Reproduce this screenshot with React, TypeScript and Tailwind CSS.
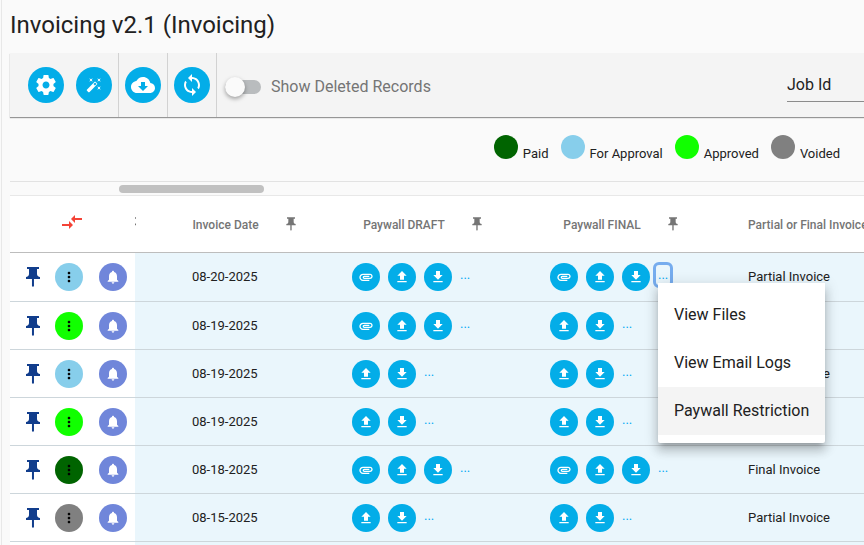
import React from "react";

type Status = "paid" | "forApproval" | "approved" | "voided";

interface Invoice {
  id: number;
  status: Status;
  date: string;
  draftFiles: boolean;
  finalFiles: boolean;
  kind: string;
  menuOpen?: boolean;
}

const statusColor: Record<Status, string> = {
  paid: "bg-[#006400]",
  forApproval: "bg-[#87ceeb]",
  approved: "bg-[#11ff00]",
  voided: "bg-[#808080]",
};

const legend: { status: Status; label: string }[] = [
  { status: "paid", label: "Paid" },
  { status: "forApproval", label: "For Approval" },
  { status: "approved", label: "Approved" },
  { status: "voided", label: "Voided" },
];

const invoices: Invoice[] = [
  { id: 1, status: "forApproval", date: "08-20-2025", draftFiles: true, finalFiles: true, kind: "Partial Invoice", menuOpen: true },
  { id: 2, status: "approved", date: "08-19-2025", draftFiles: true, finalFiles: false, kind: "" },
  { id: 3, status: "forApproval", date: "08-19-2025", draftFiles: false, finalFiles: false, kind: "Partial Invoice" },
  { id: 4, status: "approved", date: "08-19-2025", draftFiles: false, finalFiles: false, kind: "" },
  { id: 5, status: "paid", date: "08-18-2025", draftFiles: true, finalFiles: true, kind: "Final Invoice" },
  { id: 6, status: "voided", date: "08-15-2025", draftFiles: false, finalFiles: false, kind: "Partial Invoice" },
];

const paths = {
  settings:
    "M19.43 12.98c.04-.32.07-.64.07-.98s-.03-.66-.07-.98l2.11-1.65c.19-.15.24-.42.12-.64l-2-3.46c-.12-.22-.39-.3-.61-.22l-2.49 1c-.52-.4-1.08-.73-1.69-.98l-.38-2.65C14.46 2.18 14.25 2 14 2h-4c-.25 0-.46.18-.49.42l-.38 2.65c-.61.25-1.17.59-1.69.98l-2.49-1c-.23-.09-.49 0-.61.22l-2 3.46c-.13.22-.07.49.12.64l2.11 1.65c-.04.32-.07.65-.07.98s.03.66.07.98l-2.11 1.65c-.19.15-.24.42-.12.64l2 3.46c.12.22.39.3.61.22l2.49-1c.52.4 1.08.73 1.69.98l.38 2.65c.03.24.24.42.49.42h4c.25 0 .46-.18.49-.42l.38-2.65c.61-.25 1.17-.59 1.69-.98l2.49 1c.23.09.49 0 .61-.22l2-3.46c.12-.22.07-.49-.12-.64l-2.11-1.65zM12 15.5c-1.93 0-3.5-1.57-3.5-3.5s1.57-3.5 3.5-3.5 3.5 1.57 3.5 3.5-1.57 3.5-3.5 3.5z",
  wand: "M7.5 5.6L5 7l1.4-2.5L5 2l2.5 1.4L10 2 8.6 4.5 10 7 7.5 5.6zm12 9.8L22 14l-1.4 2.5L22 19l-2.5-1.4L17 19l1.4-2.5L17 14l2.5 1.4zM22 2l-1.4 2.5L22 7l-2.5-1.4L17 7l1.4-2.5L17 2l2.5 1.4L22 2zm-8.66 10.78l2.44-2.44-2.12-2.12-2.44 2.44 2.12 2.12zm1.03-5.49l2.34 2.34c.39.37.39 1.02 0 1.41L5.04 22.71c-.39.39-1.04.39-1.41 0l-2.34-2.34c-.39-.37-.39-1.02 0-1.41L12.96 7.29c.39-.39 1.04-.39 1.41 0z",
  cloud:
    "M19.35 10.04C18.67 6.59 15.64 4 12 4 9.11 4 6.6 5.64 5.35 8.04 2.34 8.36 0 10.91 0 14c0 3.31 2.69 6 6 6h13c2.76 0 5-2.24 5-5 0-2.64-2.05-4.78-4.65-4.96zM17 13l-5 5-5-5h3V9h4v4h3z",
  sync: "M12 4V1L8 5l4 4V6c3.31 0 6 2.69 6 6 0 1.01-.25 1.97-.7 2.8l1.46 1.46C19.54 15.03 20 13.57 20 12c0-4.42-3.58-8-8-8zm0 14c-3.31 0-6-2.69-6-6 0-1.01.25-1.97.7-2.8L5.24 7.74C4.46 8.97 4 10.43 4 12c0 4.42 3.58 8 8 8v3l4-4-4-4v3z",
  compare: "M9.01 14H2v2h7.01v3L13 15l-3.99-4v3zm5.98-1v-3H22V8h-7.01V5L11 9l3.99 4z",
  pin: "M16 9V4h2V2H6v2h2v5c0 1.66-1.34 3-3 3v2h5.97v7l1 1 1-1v-7H19v-2c-1.66 0-3-1.34-3-3z",
  more: "M12 8c1.1 0 2-.9 2-2s-.9-2-2-2-2 .9-2 2 .9 2 2 2zm0 2c-1.1 0-2 .9-2 2s.9 2 2 2 2-.9 2-2-.9-2-2-2zm0 6c-1.1 0-2 .9-2 2s.9 2 2 2 2-.9 2-2-.9-2-2-2z",
  bell: "M12 22c1.1 0 2-.9 2-2h-4c0 1.1.89 2 2 2zm6-6v-5c0-3.07-1.64-5.64-4.5-6.32V4c0-.83-.67-1.5-1.5-1.5s-1.5.67-1.5 1.5v.68C7.63 5.36 6 7.92 6 11v5l-2 2v1h16v-1l-2-2z",
  attachment:
    "M2 12.5C2 9.46 4.46 7 7.5 7H18c2.21 0 4 1.79 4 4s-1.79 4-4 4H9.5C8.12 15 7 13.88 7 12.5S8.12 10 9.5 10H17v2H9.41c-.55 0-.55 1 0 1H18c1.1 0 2-.9 2-2s-.9-2-2-2H7.5C5.57 9 4 10.57 4 12.5S5.57 16 7.5 16H17v2H7.5C4.46 18 2 15.54 2 12.5z",
  upload: "M9 16h6v-6h4l-7-7-7 7h4zm-4 2h14v2H5z",
  download: "M19 9h-4V3H9v6H5l7 7 7-7zM5 18v2h14v-2H5z",
};

function Icon({ name, className }: { name: keyof typeof paths; className: string }) {
  return (
    <svg viewBox="0 0 24 24" fill="currentColor" aria-hidden="true" className={`block shrink-0 ${className}`}>
      <path d={paths[name]} />
    </svg>
  );
}

function ToolButton({ icon, label, size = "size-6" }: { icon: keyof typeof paths; label: string; size?: string }) {
  return (
    <button type="button" aria-label={label} className="flex size-9 items-center justify-center rounded-full bg-[#03ade8] text-white">
      <Icon name={icon} className={size} />
    </button>
  );
}

function RoundButton({ icon, label, className, size }: { icon: keyof typeof paths; label: string; className: string; size: string }) {
  return (
    <button type="button" aria-label={label} className={`flex size-7 shrink-0 items-center justify-center rounded-full ${className}`}>
      <Icon name={icon} className={size} />
    </button>
  );
}

function FileActions({ attachment, menuOpen = false }: { attachment: boolean; menuOpen?: boolean }) {
  const blue = "bg-[#03ade8] text-white";
  return (
    <div className="flex items-center gap-2 pl-3">
      {attachment && <RoundButton icon="attachment" label="Attachment" className={blue} size="size-4" />}
      <RoundButton icon="upload" label="Upload" className={blue} size="size-4" />
      <RoundButton icon="download" label="Download" className={blue} size="size-4" />
      <div className="relative mb-1">
        <button
          type="button"
          aria-label="More options"
          aria-expanded={menuOpen}
          className={`block text-[13px] leading-4 text-[#03a9f4] ${menuOpen ? "rounded-[1px] outline-3 outline-offset-2 outline-[#76acee]" : ""}`}
        >
          ...
        </button>
        {menuOpen && <OptionsMenu />}
      </div>
    </div>
  );
}

function OptionsMenu() {
  const item = "block h-12 w-full px-4 text-left text-base whitespace-nowrap text-[#212121]";
  return (
    <div
      role="menu"
      className="absolute top-full left-0 z-10 rounded-b-xs bg-white py-2 shadow-[0_5px_5px_-3px_rgba(0,0,0,0.2),0_8px_10px_1px_rgba(0,0,0,0.14),0_3px_14px_2px_rgba(0,0,0,0.12)]"
    >
      <button type="button" role="menuitem" className={item}>View Files</button>
      <button type="button" role="menuitem" className={item}>View Email Logs</button>
      <button type="button" role="menuitem" className={`${item} bg-[#f4f4f4]`}>Paywall Restriction</button>
    </div>
  );
}

function HeaderLabel({ text, className }: { text: string; className: string }) {
  return (
    <div className={`flex items-center justify-center gap-6 ${className}`}>
      <span className="pt-0.5">{text}</span>
      <button type="button" aria-label={`Pin ${text}`}>
        <Icon name="pin" className="size-4" />
      </button>
    </div>
  );
}

export default function App() {
  return (
    <div className="h-screen overflow-hidden bg-[#fafafa] pl-px font-['Roboto',sans-serif] text-[#212121]">
      <main className="h-full border-l border-[#e8e8e8] pl-2">
        <h1 className="pt-[9px] pb-3 text-2xl leading-8 font-normal whitespace-nowrap">Invoicing v2.1 (Invoicing)</h1>

        <div className="flex h-16 bg-[#f4f4f4] pl-3 shadow-[0_1px_1px_rgba(0,0,0,0.4)]">
          <div className="flex items-center gap-3 border-r border-[#d2d2d2] px-[6px]">
            <ToolButton icon="settings" label="Settings" />
            <ToolButton icon="wand" label="Auto fix" size="size-4" />
          </div>
          <div className="flex items-center border-r border-[#d2d2d2] px-[6px]">
            <ToolButton icon="cloud" label="Download" />
          </div>
          <div className="flex items-center border-r border-[#d2d2d2] px-[6px]">
            <ToolButton icon="sync" label="Refresh" />
          </div>
          <label className="flex items-center gap-[10px] pt-1 pl-2 text-base text-[#757575]">
            <span className="relative flex h-5 w-9 items-center">
              <input type="checkbox" className="peer sr-only" />
              <span className="h-[14px] w-full rounded-full bg-[#b9bcbe]" />
              <span className="absolute left-0 size-5 rounded-full bg-[#fafafa] shadow-[0_2px_4px_rgba(0,0,0,0.35)] peer-checked:left-4" />
            </span>
            Show Deleted Records
          </label>
          <div className="ml-auto pt-4">
            <select aria-label="Search field" className="block h-[33px] w-[77px] appearance-none border-b border-[#8c8c8c] bg-transparent text-base">
              <option>Job Id</option>
            </select>
          </div>
        </div>

        <ul className="flex h-[65px] justify-end gap-3 border-b border-[#e2e2e2] pt-[18px] pr-6 text-[13px]">
          {legend.map((entry) => (
            <li key={entry.status} className="flex items-start gap-[5px]">
              <span className={`size-6 rounded-full ${statusColor[entry.status]}`} />
              <span className="pt-[11px] leading-4 whitespace-nowrap">{entry.label}</span>
            </li>
          ))}
        </ul>

        <div className="h-[14px] border-b border-[#e8e8e8] pt-[3px]">
          <div className="ml-[109px] h-2 w-[145px] rounded-full bg-[#c1c1c1]" />
        </div>

        <table className="w-full table-fixed border-separate border-spacing-0 text-[13px]">
          <colgroup>
            <col className="w-[125px]" />
            <col className="w-[205px]" />
            <col className="w-[198px]" />
            <col className="w-[198px]" />
            <col />
          </colgroup>
          <thead className="text-xs text-[#757575] [&_th]:h-[57px] [&_th]:border-b [&_th]:border-[#bdbdbd] [&_th]:bg-white [&_th]:p-0 [&_th]:font-medium">
            <tr>
              <th scope="col">
                <button type="button" aria-label="Reset pinned columns" className="block pb-1 pl-[50px] text-[#f44336]">
                  <Icon name="compare" className="size-6" />
                </button>
              </th>
              <th scope="col">
                <div className="flex items-center">
                  <div className="flex w-px justify-end overflow-hidden">
                    <Icon name="pin" className="-mr-[4px] size-4" />
                  </div>
                  <HeaderLabel text="Invoice Date" className="grow pl-[15px]" />
                </div>
              </th>
              <th scope="col"><HeaderLabel text="Paywall DRAFT" className="pr-[30px]" /></th>
              <th scope="col"><HeaderLabel text="Paywall FINAL" className="pr-[30px]" /></th>
              <th scope="col" className="text-left whitespace-nowrap"><div className="pt-0.5 pl-3">Partial or Final Invoice</div></th>
            </tr>
          </thead>
          <tbody className="[&_td]:h-12 [&_td]:border-b [&_td]:border-[#cdd6db] [&_td]:bg-[#eaf6fc] [&_td]:p-0 [&_td:first-child]:bg-white [&_tr:first-child_td]:h-[49px]">
            {invoices.map((invoice) => (
              <tr key={invoice.id}>
                <td>
                  <div className="flex items-center pl-[11px]">
                    <button type="button" aria-label="Pin row" className="mr-[10px] text-[#113d8c]">
                      <Icon name="pin" className="size-6" />
                    </button>
                    <RoundButton icon="more" label="Row actions" className={`mr-4 text-black ${statusColor[invoice.status]}`} size="size-4" />
                    <RoundButton icon="bell" label="Notify" className="bg-[#7086da] text-white" size="size-4" />
                  </div>
                </td>
                <td><span className="pl-[57px]">{invoice.date}</span></td>
                <td><FileActions attachment={invoice.draftFiles} /></td>
                <td><FileActions attachment={invoice.finalFiles} menuOpen={invoice.menuOpen} /></td>
                <td><span className="pl-3 whitespace-nowrap">{invoice.kind}</span></td>
              </tr>
            ))}
            <tr aria-hidden="true">
              <td />
              <td colSpan={4} />
            </tr>
          </tbody>
        </table>
      </main>
    </div>
  );
}
